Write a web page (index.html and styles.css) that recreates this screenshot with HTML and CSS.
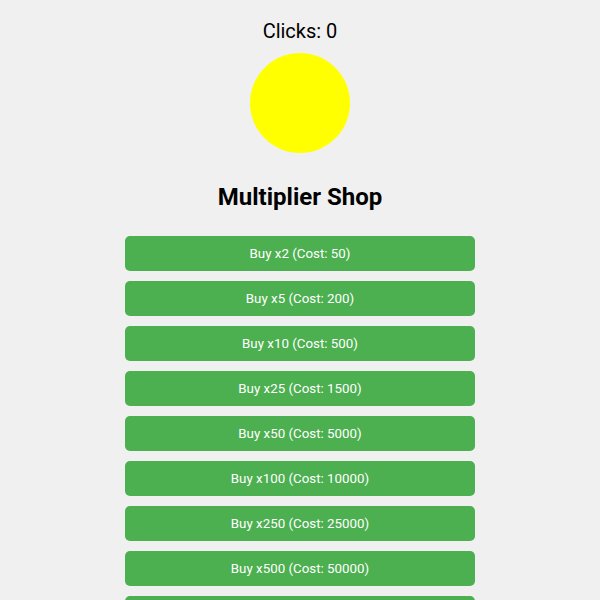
FILE: index.html
```html
<!DOCTYPE html>
<html lang="en">
<head>
    <meta charset="UTF-8">
    <meta name="viewport" content="width=device-width, initial-scale=1.0">
    <title>Clicker</title>
    <link rel="stylesheet" href="styles.css">
</head>
<body>
    <div class="counter">Clicks: <span id="clicks">0</span></div>
    <div class="circle" onclick="clickCircle()"></div>

    <h2>Multiplier Shop</h2>
    <div class="shop">
        <button class="buy" onclick="buy(2, 50)">Buy x2 (Cost: 50)</button>
        <button class="buy" onclick="buy(5, 200)">Buy x5 (Cost: 200)</button>
        <button class="buy" onclick="buy(10, 500)">Buy x10 (Cost: 500)</button>
        <button class="buy" onclick="buy(25, 1500)">Buy x25 (Cost: 1500)</button>
        <button class="buy" onclick="buy(50, 5000)">Buy x50 (Cost: 5000)</button>
        <button class="buy" onclick="buy(100, 10000)">Buy x100 (Cost: 10000)</button>
        <button class="buy" onclick="buy(250, 25000)">Buy x250 (Cost: 25000)</button>
        <button class="buy" onclick="buy(500, 50000)">Buy x500 (Cost: 50000)</button>
        <button class="buy" onclick="buy(1000, 100000)">Buy x1000 (Cost: 100000)</button>
    </div>

    <script>
        let clicks = 0;
        let multiplier = 1;

        function clickCircle() {
            clicks += multiplier;
            document.getElementById('clicks').innerText = clicks;
        }

        function buy(mult, cost) {
            if (clicks < cost) {
                alert("Not enough clicks!");
                return;
            }
            clicks -= cost;
            multiplier = mult;
            document.getElementById('clicks').innerText = clicks;
        }
    </script>
</body>
</html>
```

FILE: styles.css
```css
body {
    font-family: Roboto, Arial, sans-serif;
    background-color: #f0f0f0;
    color: black;
    margin: 0;
    padding: 20px;
    text-align: center;
}
.counter {
    font-size: 20px;
    line-height: 23px;
}
.circle {
    width: 100px;
    height: 100px;
    border-radius: 50%;
    background-color: yellow;
    margin: 10px auto 0;
    cursor: pointer;
}
h2 {
    font-size: 24px;
    line-height: 28px;
    margin: 30px 0 25px;
}
.shop {
    display: flex;
    flex-direction: column;
    align-items: center;
    gap: 10px;
}
.buy {
    width: 350px;
    height: 35px;
    padding: 0 10px;
    font-family: Roboto, Arial, sans-serif;
    font-size: 13.333px;
    color: white;
    background-color: #4caf50;
    border: none;
    border-radius: 5px;
    cursor: pointer;
}
.buy:hover {
    background-color: #45a049;
}
```
